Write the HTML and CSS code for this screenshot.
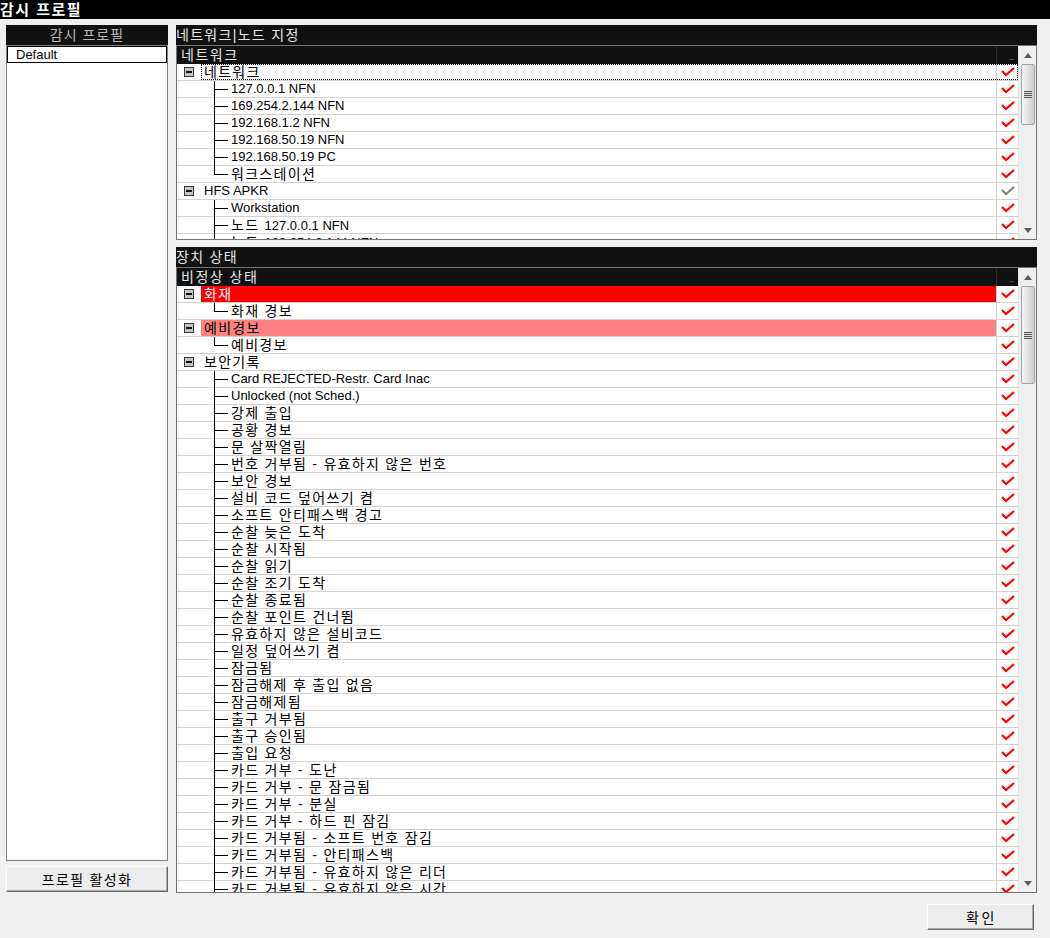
FILE: index.html
```html
<!DOCTYPE html>
<html lang="ko">
<head>
    <meta charset="UTF-8">
    <title>감시 프로필</title>
    <link rel="stylesheet" href="styles.css">
</head>
<body>
    <svg class="defs" width="0" height="0">
        <symbol id="chk" viewBox="0 0 14 10">
            <polyline points="1,4 5,8 13,1" fill="none" stroke="currentColor" stroke-width="2.2" />
        </symbol>
        <symbol id="up" viewBox="0 0 8 5">
            <polygon points="0,5 4,0 8,5" fill="currentColor" />
        </symbol>
        <symbol id="down" viewBox="0 0 8 5">
            <polygon points="0,0 8,0 4,5" fill="currentColor" />
        </symbol>
    </svg>

    <div class="titlebar">감시 프로필</div>

    <div class="main">
        <div class="left">
            <div class="panel-head centered">감시 프로필</div>
            <div class="listbox">
                <div class="list-item">Default</div>
            </div>
            <button class="btn btn-wide">프로필 활성화</button>
        </div>

        <div class="right">
            <div class="panel-head">네트워크|노드 지정</div>
            <div class="grid grid-net">
                <div class="grid-main">
                    <div class="col-head"><span class="col-name">네트워크</span><span class="col-more">..</span></div>
                    <div class="row"><span class="lead"><span class="toggle"></span></span><span class="body focus"><span class="label ko">네트워크</span><span class="chk"><svg><use href="#chk" /></svg></span></span></div>
                    <div class="row"><span class="lead"></span><span class="body"><span class="branch"></span><span class="label">127.0.0.1 NFN</span><span class="chk"><svg><use href="#chk" /></svg></span></span></div>
                    <div class="row"><span class="lead"></span><span class="body"><span class="branch"></span><span class="label">169.254.2.144 NFN</span><span class="chk"><svg><use href="#chk" /></svg></span></span></div>
                    <div class="row"><span class="lead"></span><span class="body"><span class="branch"></span><span class="label">192.168.1.2 NFN</span><span class="chk"><svg><use href="#chk" /></svg></span></span></div>
                    <div class="row"><span class="lead"></span><span class="body"><span class="branch"></span><span class="label">192.168.50.19 NFN</span><span class="chk"><svg><use href="#chk" /></svg></span></span></div>
                    <div class="row"><span class="lead"></span><span class="body"><span class="branch"></span><span class="label">192.168.50.19 PC</span><span class="chk"><svg><use href="#chk" /></svg></span></span></div>
                    <div class="row"><span class="lead"></span><span class="body"><span class="branch last"></span><span class="label ko">워크스테이션</span><span class="chk"><svg><use href="#chk" /></svg></span></span></div>
                    <div class="row"><span class="lead"><span class="toggle"></span></span><span class="body"><span class="label">HFS APKR</span><span class="chk grey"><svg><use href="#chk" /></svg></span></span></div>
                    <div class="row"><span class="lead"></span><span class="body"><span class="branch"></span><span class="label">Workstation</span><span class="chk"><svg><use href="#chk" /></svg></span></span></div>
                    <div class="row"><span class="lead"></span><span class="body"><span class="branch"></span><span class="label"><span class="ko">노드 </span>127.0.0.1 NFN</span><span class="chk"><svg><use href="#chk" /></svg></span></span></div>
                    <div class="row"><span class="lead"></span><span class="body"><span class="branch"></span><span class="label"><span class="ko">노드 </span>169.254.2.144 NFN</span><span class="chk"><svg><use href="#chk" /></svg></span></span></div>
                </div>
                <div class="scroll">
                    <div class="arrow"><svg><use href="#up" /></svg></div>
                    <div class="thumb thumb-net"><span class="grip"></span></div>
                    <div class="track"></div>
                    <div class="arrow"><svg><use href="#down" /></svg></div>
                </div>
            </div>

            <div class="panel-head spaced">장치 상태</div>
            <div class="grid grid-state">
                <div class="grid-main">
                    <div class="col-head"><span class="col-name">비정상 상태</span><span class="col-more">..</span></div>
                    <div class="row"><span class="lead"><span class="toggle"></span></span><span class="body"><span class="label ko fire">화재</span><span class="chk"><svg><use href="#chk" /></svg></span></span></div>
                    <div class="row"><span class="lead"></span><span class="body"><span class="branch last"></span><span class="label ko">화재 경보</span><span class="chk"><svg><use href="#chk" /></svg></span></span></div>
                    <div class="row"><span class="lead"><span class="toggle"></span></span><span class="body"><span class="label ko warn">예비경보</span><span class="chk"><svg><use href="#chk" /></svg></span></span></div>
                    <div class="row"><span class="lead"></span><span class="body"><span class="branch last"></span><span class="label ko">예비경보</span><span class="chk"><svg><use href="#chk" /></svg></span></span></div>
                    <div class="row"><span class="lead"><span class="toggle"></span></span><span class="body"><span class="label ko">보안기록</span><span class="chk"><svg><use href="#chk" /></svg></span></span></div>
                    <div class="row"><span class="lead"></span><span class="body"><span class="branch"></span><span class="label">Card REJECTED-Restr. Card Inac</span><span class="chk"><svg><use href="#chk" /></svg></span></span></div>
                    <div class="row"><span class="lead"></span><span class="body"><span class="branch"></span><span class="label">Unlocked (not Sched.)</span><span class="chk"><svg><use href="#chk" /></svg></span></span></div>
                    <div class="row"><span class="lead"></span><span class="body"><span class="branch"></span><span class="label ko">강제 출입</span><span class="chk"><svg><use href="#chk" /></svg></span></span></div>
                    <div class="row"><span class="lead"></span><span class="body"><span class="branch"></span><span class="label ko">공황 경보</span><span class="chk"><svg><use href="#chk" /></svg></span></span></div>
                    <div class="row"><span class="lead"></span><span class="body"><span class="branch"></span><span class="label ko">문 살짝열림</span><span class="chk"><svg><use href="#chk" /></svg></span></span></div>
                    <div class="row"><span class="lead"></span><span class="body"><span class="branch"></span><span class="label ko">번호 거부됨 - 유효하지 않은 번호</span><span class="chk"><svg><use href="#chk" /></svg></span></span></div>
                    <div class="row"><span class="lead"></span><span class="body"><span class="branch"></span><span class="label ko">보안 경보</span><span class="chk"><svg><use href="#chk" /></svg></span></span></div>
                    <div class="row"><span class="lead"></span><span class="body"><span class="branch"></span><span class="label ko">설비 코드 덮어쓰기 켬</span><span class="chk"><svg><use href="#chk" /></svg></span></span></div>
                    <div class="row"><span class="lead"></span><span class="body"><span class="branch"></span><span class="label ko">소프트 안티패스백 경고</span><span class="chk"><svg><use href="#chk" /></svg></span></span></div>
                    <div class="row"><span class="lead"></span><span class="body"><span class="branch"></span><span class="label ko">순찰 늦은 도착</span><span class="chk"><svg><use href="#chk" /></svg></span></span></div>
                    <div class="row"><span class="lead"></span><span class="body"><span class="branch"></span><span class="label ko">순찰 시작됨</span><span class="chk"><svg><use href="#chk" /></svg></span></span></div>
                    <div class="row"><span class="lead"></span><span class="body"><span class="branch"></span><span class="label ko">순찰 읽기</span><span class="chk"><svg><use href="#chk" /></svg></span></span></div>
                    <div class="row"><span class="lead"></span><span class="body"><span class="branch"></span><span class="label ko">순찰 조기 도착</span><span class="chk"><svg><use href="#chk" /></svg></span></span></div>
                    <div class="row"><span class="lead"></span><span class="body"><span class="branch"></span><span class="label ko">순찰 종료됨</span><span class="chk"><svg><use href="#chk" /></svg></span></span></div>
                    <div class="row"><span class="lead"></span><span class="body"><span class="branch"></span><span class="label ko">순찰 포인트 건너뜀</span><span class="chk"><svg><use href="#chk" /></svg></span></span></div>
                    <div class="row"><span class="lead"></span><span class="body"><span class="branch"></span><span class="label ko">유효하지 않은 설비코드</span><span class="chk"><svg><use href="#chk" /></svg></span></span></div>
                    <div class="row"><span class="lead"></span><span class="body"><span class="branch"></span><span class="label ko">일정 덮어쓰기 켬</span><span class="chk"><svg><use href="#chk" /></svg></span></span></div>
                    <div class="row"><span class="lead"></span><span class="body"><span class="branch"></span><span class="label ko">잠금됨</span><span class="chk"><svg><use href="#chk" /></svg></span></span></div>
                    <div class="row"><span class="lead"></span><span class="body"><span class="branch"></span><span class="label ko">잠금해제 후 출입 없음</span><span class="chk"><svg><use href="#chk" /></svg></span></span></div>
                    <div class="row"><span class="lead"></span><span class="body"><span class="branch"></span><span class="label ko">잠금해제됨</span><span class="chk"><svg><use href="#chk" /></svg></span></span></div>
                    <div class="row"><span class="lead"></span><span class="body"><span class="branch"></span><span class="label ko">출구 거부됨</span><span class="chk"><svg><use href="#chk" /></svg></span></span></div>
                    <div class="row"><span class="lead"></span><span class="body"><span class="branch"></span><span class="label ko">출구 승인됨</span><span class="chk"><svg><use href="#chk" /></svg></span></span></div>
                    <div class="row"><span class="lead"></span><span class="body"><span class="branch"></span><span class="label ko">출입 요청</span><span class="chk"><svg><use href="#chk" /></svg></span></span></div>
                    <div class="row"><span class="lead"></span><span class="body"><span class="branch"></span><span class="label ko">카드 거부 - 도난</span><span class="chk"><svg><use href="#chk" /></svg></span></span></div>
                    <div class="row"><span class="lead"></span><span class="body"><span class="branch"></span><span class="label ko">카드 거부 - 문 잠금됨</span><span class="chk"><svg><use href="#chk" /></svg></span></span></div>
                    <div class="row"><span class="lead"></span><span class="body"><span class="branch"></span><span class="label ko">카드 거부 - 분실</span><span class="chk"><svg><use href="#chk" /></svg></span></span></div>
                    <div class="row"><span class="lead"></span><span class="body"><span class="branch"></span><span class="label ko">카드 거부 - 하드 핀 잠김</span><span class="chk"><svg><use href="#chk" /></svg></span></span></div>
                    <div class="row"><span class="lead"></span><span class="body"><span class="branch"></span><span class="label ko">카드 거부됨 - 소프트 번호 잠김</span><span class="chk"><svg><use href="#chk" /></svg></span></span></div>
                    <div class="row"><span class="lead"></span><span class="body"><span class="branch"></span><span class="label ko">카드 거부됨 - 안티패스백</span><span class="chk"><svg><use href="#chk" /></svg></span></span></div>
                    <div class="row"><span class="lead"></span><span class="body"><span class="branch"></span><span class="label ko">카드 거부됨 - 유효하지 않은 리더</span><span class="chk"><svg><use href="#chk" /></svg></span></span></div>
                    <div class="row"><span class="lead"></span><span class="body"><span class="branch"></span><span class="label ko">카드 거부됨 - 유효하지 않은 시간</span><span class="chk"><svg><use href="#chk" /></svg></span></span></div>
                </div>
                <div class="scroll">
                    <div class="arrow"><svg><use href="#up" /></svg></div>
                    <div class="thumb thumb-state"><span class="grip"></span></div>
                    <div class="track"></div>
                    <div class="arrow"><svg><use href="#down" /></svg></div>
                </div>
            </div>
        </div>
    </div>

    <div class="footer">
        <button class="btn btn-ok">확인</button>
    </div>
</body>
</html>
```

FILE: styles.css
```css
* {
    box-sizing: border-box;
}

html,
body {
    margin: 0;
}

body {
    background: #f0f0f0;
    color: #000;
    font-family: "Liberation Sans", "Noto Sans CJK KR", sans-serif;
    font-size: 13px;
}

.defs {
    position: absolute;
}

.titlebar {
    height: 19px;
    background: #000;
    color: #fff;
    font-size: 15px;
    font-weight: bold;
    letter-spacing: 1.5px;
    line-height: 19px;
}

.main {
    display: flex;
    gap: 8px;
    padding: 6px 0 0 6px;
}

.left {
    width: 162px;
    display: flex;
    flex-direction: column;
}

.right {
    width: 861px;
    display: flex;
    flex-direction: column;
}

.panel-head {
    height: 20px;
    background: #111;
    color: #e6e6e6;
    font-size: 14px;
    letter-spacing: 1.3px;
    line-height: 20px;
    white-space: nowrap;
}

.panel-head.centered {
    text-align: center;
    color: #b8b8b8;
    letter-spacing: 1px;
}

.panel-head.spaced {
    margin-top: 7px;
}

.listbox {
    height: 816px;
    background: #fff;
    border: 1px solid #828282;
}

.list-item {
    height: 17px;
    border: 1px solid #000;
    padding-left: 8px;
    line-height: 15px;
}

/* buttons */
.btn {
    background: #ececec;
    border: 1px solid;
    border-color: #fdfdfd #6b6b6b #6b6b6b #fdfdfd;
    box-shadow: inset -1px -1px 0 #a8a8a8;
    font-family: "Liberation Sans", "Noto Sans CJK KR", sans-serif;
    font-size: 14px;
    letter-spacing: 1.3px;
    color: #000;
    padding: 0;
}

.btn-wide {
    margin-top: 5px;
    height: 26px;
    width: 100%;
}

.footer {
    display: flex;
    justify-content: flex-end;
    padding: 11px 16px 0 0;
}

.btn-ok {
    width: 107px;
    height: 26px;
    letter-spacing: 2.5px;
    padding-left: 2px;
}

/* tree grids */
.grid {
    display: flex;
    background: #fff;
    border: 1px solid #747474;
    overflow: hidden;
}

.grid-net {
    height: 195px;
}

.grid-state {
    height: 626px;
}

.grid-main {
    flex: 1;
    min-width: 0;
    display: flex;
    flex-direction: column;
    overflow: hidden;
}

.col-head {
    height: 18px;
    flex-shrink: 0;
    display: flex;
    background: #111;
    color: #e6e6e6;
}

.col-name {
    flex: 1;
    padding-left: 4px;
    font-size: 14px;
    letter-spacing: 1.5px;
    line-height: 18px;
}

.col-more {
    width: 22px;
    border-left: 1px solid #2e2e2e;
    color: #9aa4b8;
    font-size: 9px;
    line-height: 22px;
    text-align: right;
    padding-right: 4px;
}

.row {
    height: 17px;
    flex-shrink: 0;
    display: flex;
    border-bottom: 1px solid #d6d2ca;
}

.lead {
    width: 24px;
    flex-shrink: 0;
    display: flex;
    align-items: center;
}

.toggle {
    width: 10px;
    height: 10px;
    margin-left: 7px;
    border: 1px solid #3a3a3a;
    background: linear-gradient(#111, #111) center / 6px 2px no-repeat, #c4c4c4;
}

.body {
    flex: 1;
    min-width: 0;
    display: flex;
}

.body.focus {
    outline: 1px dotted #000;
    outline-offset: -1px;
}

.branch {
    width: 27px;
    flex-shrink: 0;
    margin-bottom: -1px;
    background:
        linear-gradient(#000, #000) 13px 0 / 1px 100% no-repeat,
        linear-gradient(#000, #000) 13px 8px / 14px 1px no-repeat;
}

.branch.last {
    background:
        linear-gradient(#000, #000) 13px 0 / 1px 9px no-repeat,
        linear-gradient(#000, #000) 13px 8px / 14px 1px no-repeat;
}

.label {
    flex: 1;
    min-width: 0;
    padding-left: 3px;
    line-height: 16px;
    white-space: nowrap;
    overflow: hidden;
}

.ko {
    font-size: 14px;
    letter-spacing: 1.3px;
}

.label.fire {
    background: #ff0000;
    color: #fff;
}

.label.warn {
    background: #ff8080;
}

.chk {
    width: 22px;
    flex-shrink: 0;
    border-left: 1px solid #d6d2ca;
    display: flex;
    align-items: center;
    justify-content: center;
    color: #ff0000;
}

.chk.grey {
    color: #808080;
}

.chk svg {
    width: 14px;
    height: 10px;
}

/* scrollbars */
.scroll {
    width: 18px;
    flex-shrink: 0;
    display: flex;
    flex-direction: column;
    background: #efefef;
    border-left: 1px solid #e4e4e4;
}

.arrow {
    height: 18px;
    flex-shrink: 0;
    display: flex;
    align-items: center;
    justify-content: center;
    color: #5a5a5a;
}

.arrow svg {
    width: 8px;
    height: 5px;
}

.thumb {
    margin: 0 1px 0 2px;
    flex-shrink: 0;
    border: 1px solid #a2a2a2;
    border-radius: 2px;
    background: linear-gradient(to right, #f6f6f6, #e2e2e2 50%, #cdcdcd);
    display: flex;
    align-items: center;
    justify-content: center;
}

.thumb-net {
    height: 61px;
}

.thumb-state {
    height: 98px;
}

.grip {
    width: 8px;
    height: 7px;
    background: repeating-linear-gradient(#555 0 1px, #dcdcdc 1px 2px);
}

.track {
    flex: 1;
}
```
